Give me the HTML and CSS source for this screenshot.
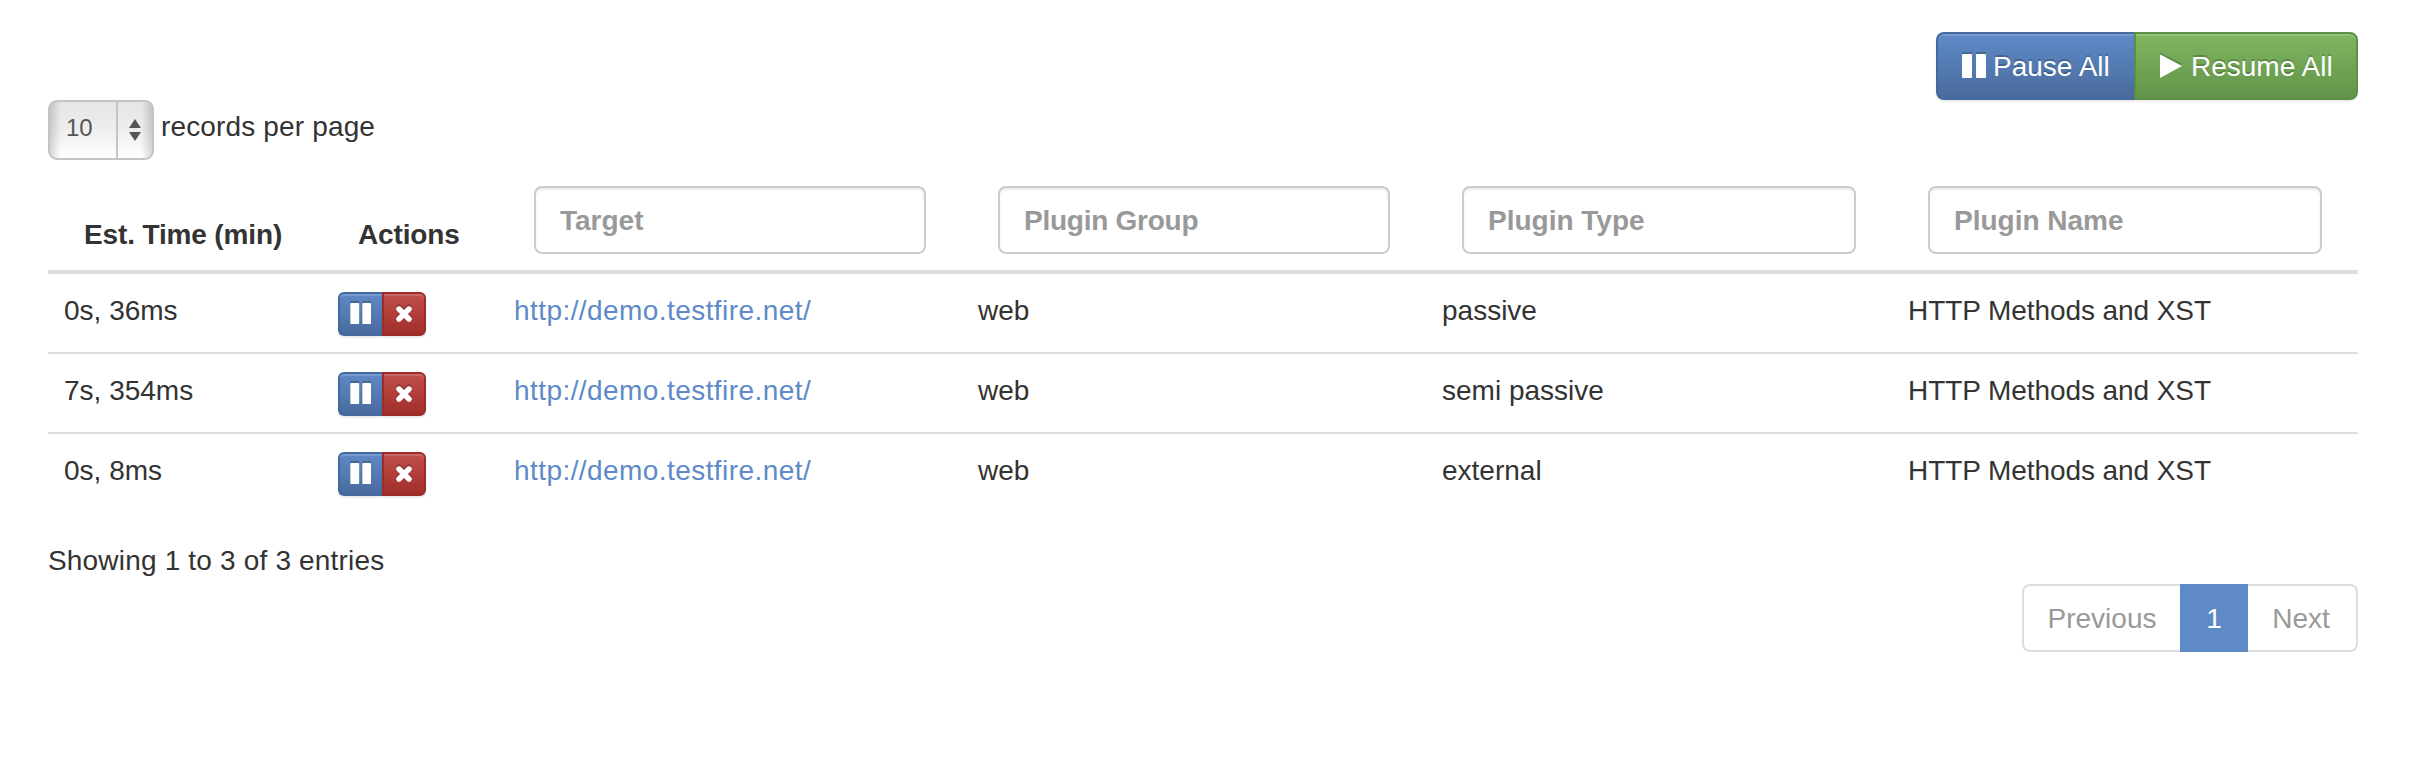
FILE: index.html
```html
<!DOCTYPE html>
<html lang="en">
<head>
<meta charset="utf-8">
<title>Worklist</title>
<link rel="stylesheet" href="styles.css">
</head>
<body>
<svg class="defs" width="0" height="0">
  <symbol id="pause" viewBox="0 0 24 24"><rect width="10" height="24" rx="1"/><rect x="14" width="10" height="24" rx="1"/></symbol>
  <symbol id="play" viewBox="0 0 24 24"><path d="M0 .3 22 12 0 24z"/></symbol>
  <symbol id="pause-sm" viewBox="0 0 22 22"><rect x=".3" width="8.9" height="21" rx="1"/><rect x="12.3" width="8.7" height="21" rx="1"/></symbol>
  <symbol id="remove" viewBox="0 0 16 16"><path d="M3 3 13 13M13 3 3 13" fill="none" stroke="#fff" stroke-width="5.4" stroke-linecap="round"/></symbol>
</svg>
<main class="page">
  <div class="toolbar">
    <button class="btn primary pause-all"><svg class="icon"><use href="#pause"/></svg><span class="label">Pause All</span></button>
    <button class="btn success resume-all"><svg class="icon"><use href="#play"/></svg><span class="label">Resume All</span></button>
  </div>
  <div class="length">
    <div class="select"><span class="value">10</span><span class="arrows"><svg width="12" height="22" viewBox="0 0 12 22"><path d="M0 9 6 0l6 9zM0 13h12l-6 9z"/></svg></span></div>
    <span class="records">records per page</span>
  </div>
  <div class="row head">
    <div class="th est">Est. Time (min)</div>
    <div class="th">Actions</div>
    <div class="filter"><input placeholder="Target"></div>
    <div class="filter group"><input placeholder="Plugin Group"></div>
    <div class="filter"><input placeholder="Plugin Type"></div>
    <div class="filter"><input placeholder="Plugin Name"></div>
  </div>
  <div class="row">
    <div class="td">0s, 36ms</div>
    <div class="td actions"><button class="btn small primary"><svg class="icon-sm"><use href="#pause-sm"/></svg></button><button class="btn small danger"><svg class="icon-x"><use href="#remove"/></svg></button></div>
    <div class="td"><a class="link">http://demo.testfire.net/</a></div>
    <div class="td">web</div>
    <div class="td">passive</div>
    <div class="td name">HTTP Methods and XST</div>
  </div>
  <div class="row">
    <div class="td">7s, 354ms</div>
    <div class="td actions"><button class="btn small primary"><svg class="icon-sm"><use href="#pause-sm"/></svg></button><button class="btn small danger"><svg class="icon-x"><use href="#remove"/></svg></button></div>
    <div class="td"><a class="link">http://demo.testfire.net/</a></div>
    <div class="td">web</div>
    <div class="td">semi passive</div>
    <div class="td name">HTTP Methods and XST</div>
  </div>
  <div class="row">
    <div class="td">0s, 8ms</div>
    <div class="td actions"><button class="btn small primary"><svg class="icon-sm"><use href="#pause-sm"/></svg></button><button class="btn small danger"><svg class="icon-x"><use href="#remove"/></svg></button></div>
    <div class="td"><a class="link">http://demo.testfire.net/</a></div>
    <div class="td">web</div>
    <div class="td">external</div>
    <div class="td name">HTTP Methods and XST</div>
  </div>
  <div class="info">Showing 1 to 3 of 3 entries</div>
  <div class="pagination">
    <span class="prev">Previous</span>
    <span class="current">1</span>
    <span class="next">Next</span>
  </div>
</main>
</body>
</html>
```
FILE: styles.css
```css
* { box-sizing: border-box; }

body {
  margin: 0;
  background: #fff;
  color: #333;
  font: 28px/40px "Liberation Sans", Arial, sans-serif;
}

.defs { display: block; }

.page { padding: 32px 62px 0 48px; }

.toolbar { display: flex; justify-content: flex-end; }

.btn {
  display: flex;
  align-items: center;
  height: 68px;
  margin: 0;
  padding: 0 24px;
  border: 2px solid;
  color: #fff;
  font: inherit;
  white-space: nowrap;
  text-shadow: 0 -2px 0 rgba(0, 0, 0, .2);
  box-shadow: inset 0 2px 0 rgba(255, 255, 255, .15), 0 2px 2px rgba(0, 0, 0, .075);
}

.btn:first-child { border-radius: 8px 0 0 8px; border-right: 0; }
.btn:last-child { border-radius: 0 8px 8px 0; }

.primary { background: linear-gradient(#5e8ac7, #496b9d); border-color: #44699f; }
.success { background: linear-gradient(#7fb661, #629449); border-color: #5c9044; }
.danger { background: linear-gradient(#c1504d, #a12e2b); border-color: #9c2c29; }

.btn svg { display: block; flex: none; fill: #fff; filter: drop-shadow(0 -2px 0 rgba(0, 0, 0, .2)); }

.pause-all { width: 198px; }
.resume-all { width: 224px; }
.icon { width: 24px; height: 24px; margin: 0 7px 0 0; }
.label { padding-top: 2px; }

.length { display: flex; height: 86px; }

.select {
  display: flex;
  width: 106px;
  height: 60px;
  border: 2px solid #c4c4c4;
  border-radius: 9px;
  color: #555;
  font-size: 24px;
  background:
    linear-gradient(90deg, rgba(0, 0, 0, .15), transparent 11px, transparent 91px, rgba(0, 0, 0, .15)),
    linear-gradient(#e5e5e5, #eee 50%, #fff);
}

.value { width: 68px; padding: 6px 0 0 16px; border-right: 2px solid #c4c4c4; }
.arrows { display: flex; flex: 1; align-items: center; padding-left: 11px; fill: #555; }
.records { padding: 7px 0 0 7px; letter-spacing: .15px; }

.row {
  display: grid;
  grid-template-columns: 274px 176px 464px 464px 466px 466px;
  height: 80px;
  border-top: 2px solid #ddd;
}

.head { height: 88px; border-top: 0; border-bottom: 4px solid #ddd; }
.head + .row { height: 78px; border-top: 0; }

.th { padding: 29px 0 0 36px; font-weight: 700; letter-spacing: -.14px; }
.filter { padding: 0 36px; }

.filter input {
  display: block;
  width: 100%;
  height: 68px;
  padding: 13px 24px 11px;
  border: 2px solid #ccc;
  border-radius: 8px;
  background: #fff;
  font: 700 28px/40px "Liberation Sans", Arial, sans-serif;
  box-shadow: inset 0 2px 2px rgba(0, 0, 0, .075);
}

.filter input::placeholder { color: #999; opacity: 1; }
.filter.group input { letter-spacing: -.25px; }

.td { padding: 17px 16px 0; }
.link { color: #5e8ac7; letter-spacing: .43px; }
.name { letter-spacing: -.08px; }

.actions { display: flex; align-items: flex-start; padding-top: 18px; }
.small { width: 44px; height: 44px; padding: 0; justify-content: center; }
.small:first-child { border-radius: 6px 0 0 6px; }
.small:last-child { border-radius: 0 6px 6px 0; }
.icon-sm { width: 22px; height: 22px; }
.icon-x { width: 16px; height: 16px; }

.info { padding-top: 29px; letter-spacing: .18px; }

.pagination { display: flex; justify-content: flex-end; margin-top: 3px; }
.pagination span { height: 68px; border: 2px solid #ddd; padding-top: 13px; color: #999; text-align: center; }
.pagination .prev { width: 158px; border-right: 0; border-radius: 8px 0 0 8px; }
.pagination .current { width: 68px; border-color: #5e8ac7; background: #5e8ac7; color: #fff; }
.pagination .next { width: 110px; padding-right: 2px; border-left: 0; border-radius: 0 8px 8px 0; }
```
